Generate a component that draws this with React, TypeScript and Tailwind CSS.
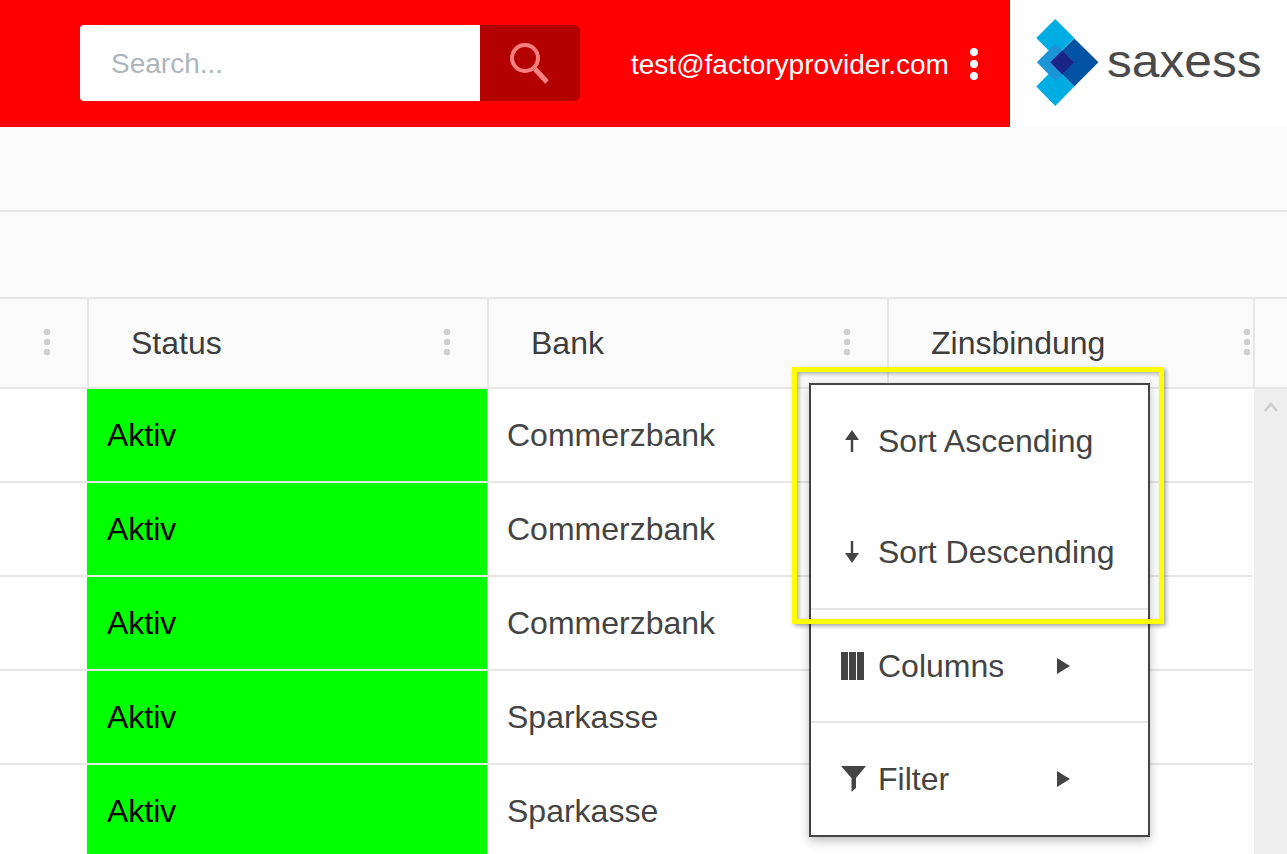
import React from "react";

type RowType = {
	status: string;
	bank: string;
};

const rows: RowType[] = [
	{ status: "Aktiv", bank: "Commerzbank" },
	{ status: "Aktiv", bank: "Commerzbank" },
	{ status: "Aktiv", bank: "Commerzbank" },
	{ status: "Aktiv", bank: "Sparkasse" },
	{ status: "Aktiv", bank: "Sparkasse" },
];

const ColumnDots = () => (
	<svg width="8" height="28" viewBox="0 0 8 28" className="shrink-0 -mt-[2px]">
		<circle cx="4" cy="4" r="3.3" fill="#cfcfcf" />
		<circle cx="4" cy="14" r="3.3" fill="#cfcfcf" />
		<circle cx="4" cy="24" r="3.3" fill="#cfcfcf" />
	</svg>
);

const HeaderCell = ({ label, className }: { label?: string; className: string }) => (
	<div className={`flex items-center justify-between border-r-2 border-[#e6e6e6] pl-[42px] ${className}`}>
		<span>{label}</span>
		<ColumnDots />
	</div>
);

const Logo = () => (
	<svg width="63" height="87" viewBox="289 56 187 260" className="shrink-0 -mt-[2px]">
		<polygon points="346,56 403,113 346,170 289,113" fill="#00ade2" />
		<polygon points="346,316 289,258 346,200 403,258" fill="#00ade2" />
		<polygon points="403,114 475,185 403,258 331,185" fill="#0353a4" />
		<polygon points="346,130 403,185 346,242 291,185" fill="#1b95d6" />
		<polygon points="367,150 403,185 367,222 331,185" fill="#1a2486" />
	</svg>
);

const SortArrow = ({ down }: { down?: boolean }) => (
	<svg width="14" height="22" viewBox="0 0 14 22" className={down ? "rotate-180" : ""}>
		<path d="M7 0 L14 10 H8.2 V22 H5.8 V10 H0 Z" fill="#444444" />
	</svg>
);

const ColumnsIcon = () => (
	<svg width="23" height="28" viewBox="0 0 23 28">
		<rect x="0" width="7" height="28" fill="#444444" />
		<rect x="8" width="7" height="28" fill="#444444" />
		<rect x="16" width="7" height="28" fill="#444444" />
	</svg>
);

const FilterIcon = () => (
	<svg width="25" height="26" viewBox="0 0 25 26">
		<path d="M0 0 H25 L15 12 V22 L10.5 26 V12 Z" fill="#444444" />
	</svg>
);

const Caret = () => (
	<svg width="13" height="16" viewBox="0 0 13 16">
		<path d="M0 0 L13 8 L0 16 Z" fill="#444444" />
	</svg>
);

const MenuItem = ({
	icon,
	label,
	caret,
	className,
}: {
	icon: React.ReactNode;
	label: string;
	caret?: boolean;
	className: string;
}) => (
	<div className={`flex items-center pl-[30px] ${className}`}>
		<div className="w-[37px] flex items-center">{icon}</div>
		<span className={caret ? "w-[179px]" : ""}>{label}</span>
		{caret && <Caret />}
	</div>
);

export default function App() {
	return (
		<div
			className="relative w-[1287px] h-[854px] overflow-hidden bg-white text-[32px] leading-none text-[#444444]"
			style={{ fontFamily: '"Liberation Sans", Arial, sans-serif' }}
		>
			<header className="flex h-[127px]">
				<div className="flex-1 bg-[#ff0000] flex items-center pl-[80px]">
					<div className="flex h-[76px] w-[500px] -mt-[1px]">
						<div className="w-[400px] bg-white rounded-l-[4px] flex items-center pl-[31px] pt-[2px] text-[#adb5bd] text-[28px]">
							Search...
						</div>
						<div className="w-[100px] bg-[#b30000] rounded-r-[6px] flex items-center justify-center">
							<svg width="42" height="42" viewBox="0 0 42 42">
								<circle cx="16" cy="16" r="13" fill="none" stroke="#ff8080" strokeWidth="4" />
								<path d="M26 27 L38 40" fill="none" stroke="#ff8080" strokeWidth="5" />
							</svg>
						</div>
					</div>
					<span className="ml-[51px] text-white text-[28px] mt-[2px]">test@factoryprovider.com</span>
					<svg width="10" height="34" viewBox="0 0 10 34" className="ml-[20px]">
						<circle cx="5" cy="5" r="4" fill="#eefafa" />
						<circle cx="5" cy="17" r="4" fill="#eefafa" />
						<circle cx="5" cy="29" r="4" fill="#eefafa" />
					</svg>
				</div>
				<div className="w-[277px] bg-white flex items-center pl-[26px]">
					<Logo />
					<span className="ml-[8px] text-[46px] text-[#4a4a4a] -mt-[5px] origin-left scale-x-[1.08]">saxess</span>
				</div>
			</header>

			<div className="h-[83px] bg-[#fafafa] border-b-2 border-[#e6e6e6] box-content" />
			<div className="h-[85px] bg-[#fafafa] border-b-2 border-[#e6e6e6] box-content" />

			<div className="flex h-[90px] bg-[#fafafa] border-b-2 border-[#e6e6e6] text-[#3d3d3d]">
				<HeaderCell className="w-[89px] pr-[36px]" />
				<HeaderCell label="Status" className="w-[400px] pr-[36px]" />
				<HeaderCell label="Bank" className="w-[400px] pr-[36px]" />
				<HeaderCell label="Zinsbindung" className="w-[366px] pr-[2px]" />
			</div>

			<div className="flex">
				<div className="w-[1253px] shrink-0">
					{rows.map((row, i) => (
						<div key={i} className="flex h-[94px] border-b-2 border-[#e6e6e6]">
							<div className="w-[87px]" />
							<div className="w-[400px] bg-[#00ff00] text-black flex items-center pl-[20px]">
								{row.status}
							</div>
							<div className="flex items-center pl-[20px]">{row.bank}</div>
						</div>
					))}
				</div>
				<div className="ml-[1px] w-[33px] h-[465px] bg-[#eeeeee] flex justify-center pt-[13px]">
					<svg width="14" height="10" viewBox="0 0 14 10">
						<path d="M1 9 L7 2 L13 9" fill="none" stroke="#cccccc" strokeWidth="2.5" />
					</svg>
				</div>
			</div>

			{/* column menu, sits over the grid */}
			<div className="absolute left-[809px] top-[383px] w-[341px] h-[454px] bg-white border-2 border-[#444444] shadow-[0_4px_10px_rgba(0,0,0,0.25)]">
				<MenuItem
					className="h-[112px]"
					icon={<div className="ml-[4px]"><SortArrow /></div>}
					label="Sort Ascending"
				/>
				<MenuItem
					className="h-[109px] pb-[2px] border-b-2 border-[#e6e6e6] box-content"
					icon={<div className="ml-[4px]"><SortArrow down /></div>}
					label="Sort Descending"
				/>
				<MenuItem className="h-[111px] border-b-2 border-[#e6e6e6] box-content" icon={<ColumnsIcon />} label="Columns" caret />
				<MenuItem className="h-[112px]" icon={<FilterIcon />} label="Filter" caret />
			</div>

			{/* yellow highlight */}
			<div className="absolute left-[792px] top-[367px] w-[372px] h-[257px] border-[5px] border-[#ffff00] shadow-[2px_2px_4px_rgba(0,0,0,0.35),inset_2px_2px_4px_rgba(0,0,0,0.3)] pointer-events-none" />
		</div>
	);
}
